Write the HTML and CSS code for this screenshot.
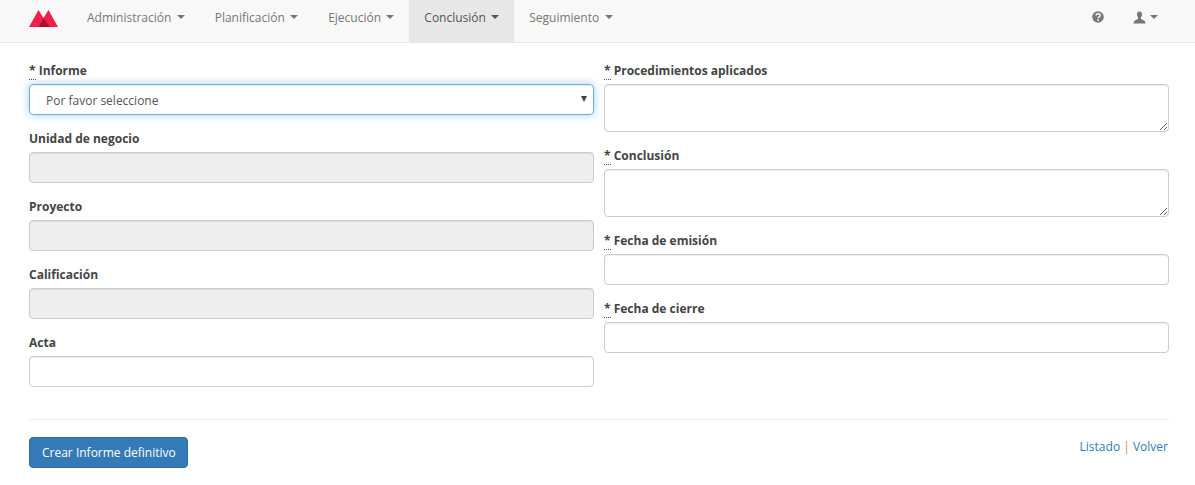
FILE: index.html
```html
<html>
<head>
<meta charset="utf-8">
<link rel="stylesheet" href="styles.css">
</head>
<body>
<nav class="navbar">
  <a class="brand" href="#">
    <svg width="29" height="17" viewBox="0 0 29 17">
      <path fill="#ee2049" d="M0 17 L9.5 0 L14.5 8 L19.5 0 L29 17 Z"/>
      <path fill="#a80f30" d="M9.5 17 L14.5 8.5 L21 17 Z"/>
    </svg>
  </a>
  <ul class="nav">
    <li><a href="#">Administración <span class="caret"></span></a></li>
    <li><a href="#">Planificación <span class="caret"></span></a></li>
    <li><a href="#">Ejecución <span class="caret"></span></a></li>
    <li class="active"><a href="#">Conclusión <span class="caret"></span></a></li>
    <li><a href="#">Seguimiento <span class="caret"></span></a></li>
  </ul>
  <ul class="nav nav-right">
    <li><a href="#">
      <svg class="icon" width="12" height="12" viewBox="0 0 12 12">
        <circle cx="6" cy="6" r="5.8" fill="#777"/>
        <path d="M4 4.6 C4 2.2 8.2 2.2 8.2 4.5 C8.2 6 6.1 5.8 6.1 7.2" fill="none" stroke="#f8f8f8" stroke-width="1.5"/>
        <rect x="5.3" y="8.2" width="1.6" height="1.6" fill="#f8f8f8"/>
      </svg>
    </a></li>
    <li class="nav-user"><a href="#">
      <svg class="icon" width="13" height="13" viewBox="0 0 13 13">
        <path fill="#777" d="M6.5 0.5 C8.4 0.5 9.2 2 9 3.8 C8.9 5.2 8.2 6.2 7.8 7 C7.8 8 8.6 8.4 10 9 C11.4 9.6 12.3 10.2 12.5 12.5 L0.5 12.5 C0.7 10.2 1.6 9.6 3 9 C4.4 8.4 5.2 8 5.2 7 C4.8 6.2 4.1 5.2 4 3.8 C3.8 2 4.6 0.5 6.5 0.5 Z"/>
      </svg>
      <span class="caret"></span>
    </a></li>
  </ul>
</nav>

<div class="container">
  <form>
    <div class="row">
      <div class="col">
        <div class="form-group">
          <label><abbr>*</abbr> Informe</label>
          <div class="select focus"><span class="select-text">Por favor seleccione</span><span class="select-arrow"></span></div>
        </div>
        <div class="form-group">
          <label>Unidad de negocio</label>
          <input class="form-control" disabled>
        </div>
        <div class="form-group">
          <label>Proyecto</label>
          <input class="form-control" disabled>
        </div>
        <div class="form-group">
          <label>Calificación</label>
          <input class="form-control" disabled>
        </div>
        <div class="form-group">
          <label>Acta</label>
          <input class="form-control">
        </div>
      </div>
      <div class="col">
        <div class="form-group">
          <label><abbr>*</abbr> Procedimientos aplicados</label>
          <textarea class="form-control"></textarea>
        </div>
        <div class="form-group">
          <label><abbr>*</abbr> Conclusión</label>
          <textarea class="form-control"></textarea>
        </div>
        <div class="form-group">
          <label><abbr>*</abbr> Fecha de emisión</label>
          <input class="form-control">
        </div>
        <div class="form-group">
          <label><abbr>*</abbr> Fecha de cierre</label>
          <input class="form-control">
        </div>
      </div>
    </div>
    <hr>
    <div class="actions">
      <button class="btn" type="button">Crear Informe definitivo</button>
      <div class="links"><a href="#">Listado</a> <span class="sep">|</span> <a href="#">Volver</a></div>
    </div>
  </form>
</div>
</body>
</html>
```

FILE: styles.css
```css
*{
box-sizing: border-box;
}
body{
background-color:#fff; color:#555; font-family:"Open Sans", sans-serif; font-size:12px; line-height:17px; margin:0;
}
a{
text-decoration:none;
}
.navbar{
background-color:#f8f8f8; border-bottom:1px solid #e7e7e7; display:flex; height:43px; padding-left:29px;
}
.brand{
display:flex; align-items:center; margin-right:14px; padding-bottom:6px;
}
.nav{
display:flex; list-style:none; margin:0; padding:0;
}
.nav a{
align-items:center; color:#777; display:flex; gap:4px; height:42px; padding:0 15px 8px;
}
.nav .active a{
background-color:#e7e7e7; color:#555;
}
.nav-right{
margin-left:auto; margin-right:22px;
}
.nav-right a{
gap:3px;
}
.nav-right .nav-user a{
padding-left:14px;
}
.caret{
border-left:4px solid transparent; border-right:4px solid transparent; border-top:4px solid currentColor; display:inline-block; margin-left:1.3px;
}
.container{
padding:0 26px 0 29px;
}
.row{
display:grid; gap:10px; grid-template-columns:565px 565px;
}
.form-group{
margin-bottom:15px;
}
label{
color:#444; display:block; font-weight:700; height:17px; margin-bottom:5px;
}
abbr{
border-bottom:1px dotted #555;
}
.col{
padding-top:19px;
}
.form-control, .select{
border:1px solid #ccc; border-radius:4px; box-shadow:inset 0 1px 1px rgba(0,0,0,.075); display:block; font-family:inherit; font-size:12px; height:31px; width:100%;
}
.form-control[disabled]{
background-color:#eee;
}
textarea.form-control{
height:48px; resize:vertical;
}
.select{
align-items:center; color:#555; display:flex; padding-left:16px; position:relative;
}
.select-text{
padding-top:2px;
}
.select.focus{
border-color:#66afe9; box-shadow:inset 0 1px 1px rgba(0,0,0,.075), 0 0 8px rgba(102,175,233,.6);
}
.select-arrow{
border-left:3px solid transparent; border-right:3px solid transparent; border-top:6px solid #444; position:absolute; right:6px; top:11px;
}
hr{
border:0; border-top:1px solid #eee; margin:17px 0 17px;
}
.actions{
align-items:flex-start; display:flex; justify-content:space-between;
}
.btn{
background-color:#337ab7; border:1px solid #2e6da4; border-radius:4px; color:#fff; font-family:inherit; font-size:12px; height:31px; padding:0 11px 0 12px;
}
.links{
margin-right:1px; margin-top:1px;
}
.links a{
color:#337ab7;
}
.sep{
color:#d98a3a;
}
```
